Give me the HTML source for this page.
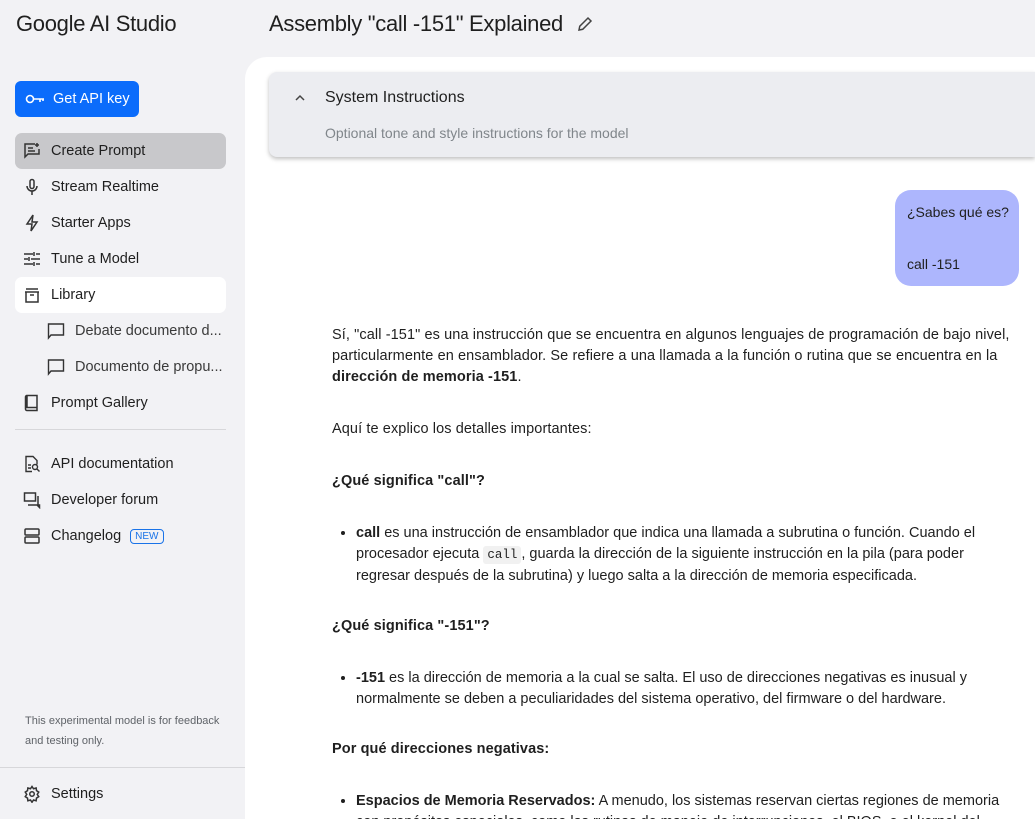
<!DOCTYPE html>
<html><head><meta charset="utf-8"><style>
*{box-sizing:border-box;margin:0;padding:0}
html,body{width:1035px;height:819px;overflow:hidden}
body{background:#f2f2f5;font-family:"Liberation Sans",sans-serif;color:#1f1f1f;position:relative}
.logo{position:absolute;left:16px;top:11px;font-size:22px;letter-spacing:-0.3px;color:#1f1f1f}
.title{position:absolute;left:269px;top:11px;font-size:22px;letter-spacing:-0.3px;color:#1f1f1f}
.pen{position:absolute;left:576px;top:15px}
.btn{position:absolute;left:15px;top:81px;width:124px;height:36px;background:#0b6cfb;border-radius:6px;color:#fff;font-size:14.5px;display:flex;align-items:center;padding-left:10px}
.btn svg{margin-right:8px}
.nav{position:absolute;left:15px;width:211px;height:36px;display:flex;align-items:center;padding-left:8px;font-size:14.5px;border-radius:7px;color:#1f1f1f}
.nav svg{margin-right:10px;flex:none}
.sub{padding-left:32px;color:#3a3a3a}
.sep{position:absolute;left:15px;width:211px;height:1px;background:#d7d7da}
.note{position:absolute;left:25px;top:711px;font-size:11px;line-height:20px;color:#5f6368}
.badge{margin-left:9px;border:1px solid #1a73e8;color:#1a73e8;font-size:10px;border-radius:4px;padding:1px 4px}
.main{position:absolute;left:245px;top:57px;width:790px;height:762px;background:#fff;border-top-left-radius:22px}
.sys{position:absolute;left:269px;top:72px;width:766px;height:85px;background:#ecedf1;border-radius:8px 0 0 8px;box-shadow:0 2px 4px rgba(0,0,0,.25)}
.sys .h{position:absolute;left:56px;top:17px;font-size:16px;color:#1f1f1f}
.sys .d{position:absolute;left:56px;top:53px;font-size:14px;color:#80868b}
.sys .c{position:absolute;left:26px;top:22px}
.bub{position:absolute;left:895px;top:190px;width:124px;height:96px;background:#adb6fd;border-radius:16px;font-size:14px;white-space:nowrap}
.bub div{position:absolute;left:12px}
.txt{position:absolute;left:332px;width:680px;font-size:14.5px;line-height:21px;color:#1f1f1f;letter-spacing:0.1px}
.txt li{letter-spacing:0}
b{font-weight:bold}
ul{padding-left:24px}
code{font-family:"Liberation Mono",monospace;font-size:12.5px;background:#f1f1f1;padding:2px 4px;border-radius:3px;letter-spacing:0}
</style></head><body>
<div class="logo">Google AI Studio</div>
<div class="title">Assembly "call -151" Explained</div>
<svg class="pen" width="18" height="18" viewBox="0 0 24 24" fill="none" stroke="#444" stroke-width="2"><path d="M4 20l1-5L16 4l4 4L9 19z"/></svg>

<div class="btn"><svg width="20" height="12" viewBox="0 0 20 12" fill="none" stroke="#fff" stroke-width="1.6"><circle cx="5" cy="6" r="3.5"/><path d="M8.5 6H19M15 6v3M18 6v2"/></svg>Get API key</div>

<div class="nav" style="top:133px;background:#c8c8cb"><svg width="18" height="18" viewBox="0 0 18 18" fill="none" stroke="#333" stroke-width="1.5"><path d="M12 2H2v13l3-3h11V7"/><path d="M5 6h5M5 9h7"/><path d="M14 1v4M12 3h4"/></svg>Create Prompt</div>
<div class="nav" style="top:169px"><svg width="18" height="18" viewBox="0 0 18 18" fill="none" stroke="#333" stroke-width="1.5"><rect x="7" y="1.5" width="4" height="9" rx="2"/><path d="M4 8a5 5 0 0010 0M9 13v4"/></svg>Stream Realtime</div>
<div class="nav" style="top:205px"><svg width="18" height="18" viewBox="0 0 18 18" fill="none" stroke="#333" stroke-width="1.5"><path d="M10 1L4 10h5l-1 7 6-9H9z"/></svg>Starter Apps</div>
<div class="nav" style="top:241px"><svg width="18" height="18" viewBox="0 0 18 18" fill="none" stroke="#333" stroke-width="1.5"><path d="M1 4h9M13 4h4M11 2v4M1 9h4M8 9h9M6 7v4M1 14h9M13 14h4M11 12v4"/></svg>Tune a Model</div>
<div class="nav" style="top:277px;background:#fff"><svg width="18" height="18" viewBox="0 0 18 18" fill="none" stroke="#333" stroke-width="1.5"><path d="M3 3h12M2 6h14M3 6v10h12V6M7 9h4"/></svg>Library</div>
<div class="nav sub" style="top:313px"><svg width="18" height="18" viewBox="0 0 18 18" fill="none" stroke="#333" stroke-width="1.4"><path d="M1.5 2h15v11H4l-2.5 3z"/></svg>Debate documento d...</div>
<div class="nav sub" style="top:349px"><svg width="18" height="18" viewBox="0 0 18 18" fill="none" stroke="#333" stroke-width="1.4"><path d="M1.5 2h15v11H4l-2.5 3z"/></svg>Documento de propu...</div>
<div class="nav" style="top:385px"><svg width="18" height="18" viewBox="0 0 18 18" fill="none" stroke="#333" stroke-width="1.5"><path d="M4 1.5h10v12H4zM4 1.5a1.5 1.5 0 00-1.5 1.5v12A1.5 1.5 0 004 16.5h10v-3"/></svg>Prompt Gallery</div>
<div class="sep" style="top:429px"></div>
<div class="nav" style="top:446px"><svg width="18" height="18" viewBox="0 0 18 18" fill="none" stroke="#333" stroke-width="1.4"><path d="M9 16.5H3V1.5h7l4 4v4"/><path d="M5 10h3M5 13h3"/><circle cx="12" cy="12" r="2.5"/><path d="M14 14l2.5 2.5"/></svg>API documentation</div>
<div class="nav" style="top:482px"><svg width="18" height="18" viewBox="0 0 18 18" fill="none" stroke="#333" stroke-width="1.5"><path d="M1.5 2h11v8h-11zM15 5v9h1.5v2.5L14 14H5"/></svg>Developer forum</div>
<div class="nav" style="top:518px"><svg width="18" height="18" viewBox="0 0 18 18" fill="none" stroke="#333" stroke-width="1.5"><rect x="2" y="2" width="14" height="6" rx="1"/><rect x="2" y="10" width="14" height="6" rx="1"/></svg>Changelog<span class="badge">NEW</span></div>
<div class="note">This experimental model is for feedback<br>and testing only.</div>
<div class="sep" style="top:767px;left:0;width:245px"></div>
<div class="nav" style="top:776px"><svg width="18" height="18" viewBox="0 0 24 24" fill="none" stroke="#333" stroke-width="2"><circle cx="12" cy="12" r="3"/><path d="M12 2l2 3 3.5-1 .5 3.5 3 2-2 3 2 3-3 2-.5 3.5-3.5-1-2 3-2-3-3.5 1-.5-3.5-3-2 2-3-2-3 3-2 .5-3.5 3.5 1z"/></svg>Settings</div>

<div class="main"></div>
<div class="sys"><svg class="c" width="10" height="8" viewBox="0 0 10 8" fill="none" stroke="#444" stroke-width="1.5"><path d="M1 6l4-4 4 4"/></svg><div class="h">System Instructions</div><div class="d">Optional tone and style instructions for the model</div></div>
<div class="bub"><div style="top:14px">¿Sabes qué es?</div><div style="top:66px">call -151</div></div>

<div class="txt" style="top:325px">Sí, "call -151" es una instrucción que se encuentra en algunos lenguajes de programación de bajo nivel, particularmente en ensamblador. Se refiere a una llamada a la función o rutina que se encuentra en la <b>dirección de memoria -151</b>.</div>
<div class="txt" style="top:419px">Aquí te explico los detalles importantes:</div>
<div class="txt" style="top:471px"><b>¿Qué significa "call"?</b></div>
<div class="txt" style="top:523px"><ul><li><b>call</b> es una instrucción de ensamblador que indica una llamada a subrutina o función. Cuando el procesador ejecuta <code>call</code>, guarda la dirección de la siguiente instrucción en la pila (para poder regresar después de la subrutina) y luego salta a la dirección de memoria especificada.</li></ul></div>
<div class="txt" style="top:616px"><b>¿Qué significa "-151"?</b></div>
<div class="txt" style="top:668px"><ul><li><b>-151</b> es la dirección de memoria a la cual se salta. El uso de direcciones negativas es inusual y normalmente se deben a peculiaridades del sistema operativo, del firmware o del hardware.</li></ul></div>
<div class="txt" style="top:739px"><b>Por qué direcciones negativas:</b></div>
<div class="txt" style="top:791px"><ul><li><b>Espacios de Memoria Reservados:</b> A menudo, los sistemas reservan ciertas regiones de memoria con propósitos especiales, como las rutinas de manejo de interrupciones, el BIOS, o el kernel del sistema.</li></ul></div>
</body></html>
